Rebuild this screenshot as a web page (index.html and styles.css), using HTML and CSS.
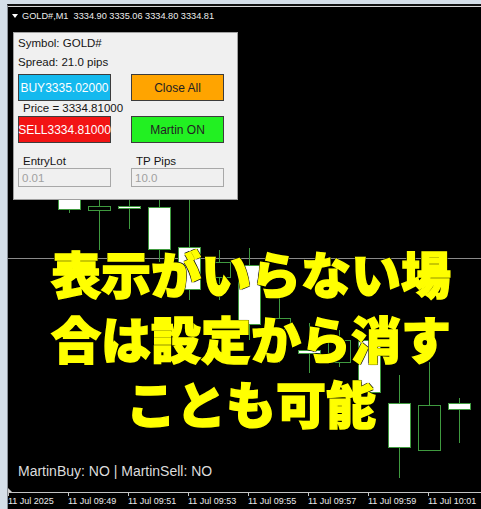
FILE: index.html
```html
<!DOCTYPE html>
<html lang="ja">
<head>
<meta charset="utf-8">
<title>GOLD# M1</title>
<link rel="stylesheet" href="styles.css">
</head>
<body>
<div class="window">
  <div class="frame">
    <div class="chart">
      <div class="header"><span class="tri"></span><span>GOLD#,M1&nbsp; 3334.90 3335.06 3334.80 3334.81</span></div>
      <div class="plot">
        <div class="price-line"></div>
        <div class="wick" style="left:61px;top:140px;height:48px"></div><div class="body bull" style="left:50px;top:145px;height:40px"></div>
        <div class="wick" style="left:91px;top:170px;height:55px"></div><div class="body bear" style="left:80px;top:181px;height:5px"></div>
        <div class="wick" style="left:121px;top:170px;height:34px"></div><div class="body bull" style="left:110px;top:181px;height:3px"></div>
        <div class="wick" style="left:151px;top:170px;height:67px"></div><div class="body bull" style="left:140px;top:182px;height:43px"></div>
        <div class="wick" style="left:181px;top:170px;height:105px"></div><div class="body bull" style="left:170px;top:222px;height:43px"></div>
        <div class="wick" style="left:211px;top:225px;height:50px"></div><div class="body bear" style="left:200px;top:237px;height:16px"></div>
        <div class="wick" style="left:241px;top:223px;height:92px"></div><div class="body bull" style="left:230px;top:240px;height:60px"></div>
        <div class="wick" style="left:271px;top:273px;height:65px"></div><div class="body bear" style="left:260px;top:293px;height:12px"></div>
        <div class="wick" style="left:301px;top:298px;height:50px"></div><div class="body bull" style="left:290px;top:325px;height:4px"></div>
        <div class="wick" style="left:331px;top:305px;height:37px"></div><div class="body bear" style="left:320px;top:315px;height:23px"></div>
        <div class="wick" style="left:361px;top:305px;height:70px"></div><div class="body bull" style="left:350px;top:315px;height:53px"></div>
        <div class="wick" style="left:391px;top:350px;height:103px"></div><div class="body bull" style="left:380px;top:378px;height:45px"></div>
        <div class="wick" style="left:421px;top:337px;height:89px"></div><div class="body bear" style="left:410px;top:380px;height:46px"></div>
        <div class="wick" style="left:451px;top:373px;height:45px"></div><div class="body bull" style="left:440px;top:378px;height:7px"></div>
      </div>
      <div class="axis">
        <div class="axis-label first">11 Jul 2025</div>
        <div class="axis-label">11 Jul 09:49</div>
        <div class="axis-label">11 Jul 09:51</div>
        <div class="axis-label">11 Jul 09:53</div>
        <div class="axis-label">11 Jul 09:55</div>
        <div class="axis-label">11 Jul 09:57</div>
        <div class="axis-label">11 Jul 09:59</div>
        <div class="axis-label">11 Jul 10:01</div>
      </div>

      <div class="panel">
        <div class="info">Symbol: GOLD#</div>
        <div class="info">Spread: 21.0 pips</div>
        <div class="btn-row">
          <div class="btn buy">BUY3335.02000</div>
          <div class="btn close">Close All</div>
        </div>
        <div class="price">Price = 3334.81000</div>
        <div class="btn-row tight">
          <div class="btn sell">SELL3334.81000</div>
          <div class="btn martin">Martin ON</div>
        </div>
        <div class="labels">
          <div class="label">EntryLot</div>
          <div class="label">TP Pips</div>
        </div>
        <div class="inputs">
          <div class="input">0.01</div>
          <div class="input">10.0</div>
        </div>
      </div>

      <div class="status">MartinBuy: NO | MartinSell: NO</div>

      <div class="banner">表示がいらない場<br>合は設定から消す<br>ことも可能</div>
    </div>
    <div class="scale"></div>
  </div>
</div>
</body>
</html>
```

FILE: styles.css
```css
* { box-sizing: border-box; }
html, body { margin: 0; padding: 0; }
body {
  width: 481px;
  height: 509px;
  overflow: hidden;
  background: #d5dfe9;
  font-family: "Liberation Sans", Arial, sans-serif;
}
.window {
  display: flex;
  height: 509px;
  padding: 4px 0 0 7px;
}
.frame {
  flex: 1;
  display: flex;
  border-top: 2px solid #111;
  border-left: 1px solid #8a9098;
}
.chart {
  position: relative;
  flex: 1;
  display: flex;
  flex-direction: column;
  background: #000;
  border-top: 1px solid #d8d8d8;
}
.scale {
  width: 6px;
  border-left: 1px solid #8c8c8c;
  background: repeating-linear-gradient(to bottom, #e2e2e2 0 15px, #aaaaaa 15px 21px);
}
.header {
  height: 18px;
  display: flex;
  align-items: center;
  gap: 4px;
  padding-left: 4px;
  color: #ececec;
  font-size: 9.2px;
}
.tri {
  width: 0;
  height: 0;
  border-left: 3px solid transparent;
  border-right: 3px solid transparent;
  border-top: 4px solid #fff;
}
.plot {
  position: relative;
  flex: 1;
}
.price-line {
  position: absolute;
  left: 0;
  right: 0;
  top: 233px;
  height: 1px;
  background: #8a8a8a;
}
.wick {
  position: absolute;
  width: 1px;
  background: #3f9a3f;
}
.body {
  position: absolute;
  width: 23px;
  border: 1px solid #3f9a3f;
}
.bull { background: #fff; }
.bear { background: #000; }

.axis {
  height: 17px;
  border-top: 1px solid #c4c4c4;
  display: grid;
  grid-template-columns: repeat(8, 60px);
}
.axis-label {
  position: relative;
  padding-top: 3px;
  font-size: 9px;
  line-height: 10px;
  color: #ececec;
  white-space: nowrap;
}
.axis-label::before {
  content: "";
  position: absolute;
  left: 0;
  top: 0;
  width: 1px;
  height: 3px;
  background: #c4c4c4;
}
.axis-label.first::after {
  content: "";
  position: absolute;
  left: 0;
  top: -5px;
  border-left: 4px solid #d0d0d0;
  border-top: 4px solid transparent;
}

.panel {
  position: absolute;
  left: 5px;
  top: 25px;
  width: 225px;
  height: 168px;
  display: flex;
  flex-direction: column;
  padding: 1px 0 0 4px;
  background: #f0f0f0;
  border: 1px solid #a0a0a0;
  color: #151515;
  font-size: 11.5px;
}
.info { line-height: 19px; }
.btn-row {
  display: grid;
  grid-template-columns: 93px 93px;
  column-gap: 20px;
  margin-top: 2px;
}
.btn-row.tight { margin-top: 0; }
.btn {
  height: 27px;
  display: flex;
  align-items: center;
  justify-content: center;
  border: 1px solid #3c3c3c;
  font-size: 12px;
}
.buy { background: #14b9ee; color: #fff; }
.close { background: #ffa400; color: #222; }
.sell { background: #f21414; color: #fff; }
.martin { background: #22f022; color: #222; }
.price {
  line-height: 15px;
  padding-left: 5px;
}
.labels {
  height: 25px;
  display: grid;
  grid-template-columns: 93px 93px;
  column-gap: 20px;
  align-items: end;
  line-height: 14px;
}
.label { padding-left: 5px; }
.inputs {
  display: grid;
  grid-template-columns: 93px 93px;
  column-gap: 20px;
}
.input {
  height: 19px;
  display: flex;
  align-items: center;
  padding-left: 3px;
  background: #f0f0f0;
  border: 1px solid #a8a8a8;
  color: #a0a0a0;
}

.status {
  position: absolute;
  left: 10px;
  top: 456px;
  font-size: 14px;
  line-height: 16px;
  color: #dcdcdc;
}

.banner {
  position: absolute;
  left: 43px;
  top: 233px;
  width: 400px;
  text-align: center;
  font-family: "Noto Sans CJK JP", "Noto Sans CJK SC", sans-serif;
  font-weight: 900;
  font-size: 50px;
  line-height: 65px;
  color: #ffff00;
  -webkit-text-stroke: 1.4px #ffff00;
  text-shadow: 1px 1px 0 #000, -1px -1px 0 #000, 1px -1px 0 #000, -1px 1px 0 #000, 0 0 2px #000;
}
```
